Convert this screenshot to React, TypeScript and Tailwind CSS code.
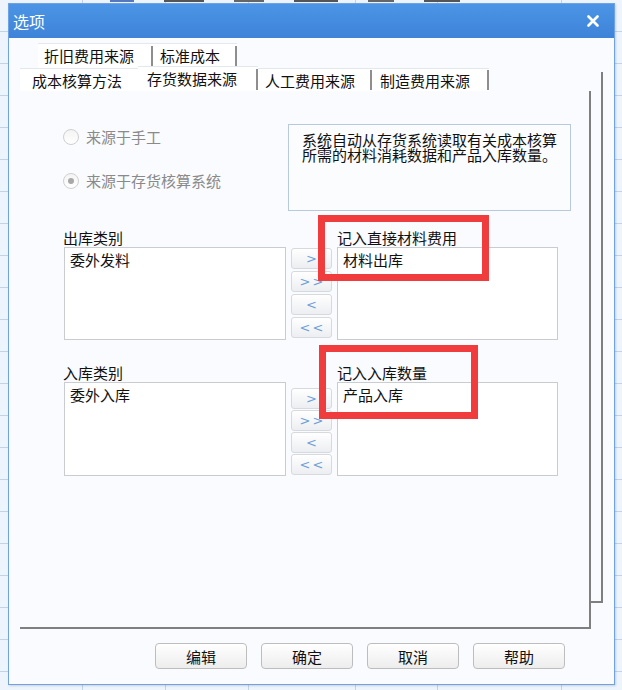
import React from "react";

function ArrowButtons({ section }: { section: 1 | 2 }) {
  const items = [">", ">>", "<", "<<"];
  return (
    <div
      className={
        section === 1
          ? "flex flex-col w-[41px] gap-[2px] mt-[1px]"
          : "flex flex-col w-[41px] gap-[1px] mt-[6px]"
      }
    >
      {items.map((t) => (
        <div
          key={t}
          className="h-[21px] rounded-[3px] border border-[#d6dade] bg-linear-to-b from-white to-[#eceef1] flex items-center justify-center text-[13px] leading-none text-[#6f9fd6] tracking-[2px] pl-[2px] [font-family:'DejaVu_Sans',sans-serif]"
        >
          {t}
        </div>
      ))}
    </div>
  );
}

function ListBox({ w, h, item }: { w: string; h: string; item: string }) {
  return (
    <div className={w + " " + h + " border border-[#c9cdd2] bg-white pl-[5px] pt-[2px] text-[15px] leading-[19px] text-[#111]"}>
      {item}
    </div>
  );
}

function Radio({ checked, label }: { checked: boolean; label: string }) {
  return (
    <div className="h-[22px] flex items-center">
      <div className="w-[16px] h-[16px] rounded-full border border-[#cfcfcf] bg-linear-to-b from-[#f4f4f4] to-white flex items-center justify-center">
        {checked && <div className="w-[6px] h-[6px] rounded-full bg-[#a8a8a8]" />}
      </div>
      <span className="ml-[7px] text-[15px] leading-[20px] text-[#8a8a8a]">{label}</span>
    </div>
  );
}

export default function App() {
  return (
    <div className="relative w-[622px] h-[690px] overflow-hidden bg-[#eef4fb] [font-family:'Noto_Sans_CJK_SC','Noto_Sans',sans-serif]">
      {/* spreadsheet grid behind */}
      <div className="absolute inset-0 bg-[repeating-linear-gradient(180deg,transparent_0px,transparent_31px,#c3d3e7_31px,#c3d3e7_32px)]" />
      <div className="absolute inset-0 flex">
        <div className="w-[83px] h-full border-r border-[#c3d3e7]" />
        <div className="w-[83px] h-full border-r border-[#c3d3e7]" />
        <div className="w-[83px] h-full border-r border-[#c3d3e7]" />
        <div className="w-[107px] h-full border-r border-[#c3d3e7]" />
        <div className="w-[82px] h-full border-r border-[#c3d3e7]" />
        <div className="w-[124px] h-full border-r border-[#c3d3e7]" />
      </div>
      <div className="absolute left-0 top-0 w-full h-[3px] flex gap-[30px] pl-[110px]">
        <div className="w-[24px] h-[2px] bg-[#5577bb]" />
        <div className="w-[40px] h-[2px] bg-[#555]" />
        <div className="w-[30px] h-[2px] bg-[#666]" />
        <div className="w-[44px] h-[2px] bg-[#555]" />
        <div className="w-[26px] h-[2px] bg-[#666]" />
        <div className="w-[36px] h-[2px] bg-[#555]" />
      </div>

      {/* dialog window */}
      <div className="absolute left-[8px] top-[3px] w-[607px] h-[682px] border border-[#6fa2e4] bg-[#f9fbfe] flex flex-col shadow-[1px_1px_2px_rgba(0,0,0,0.15)]">
        {/* title bar */}
        <div className="h-[34px] shrink-0 bg-linear-to-b from-[#4c94e5] to-[#3d84d9] flex items-center justify-between pl-[4px] pr-[15px]">
          <span className="text-white text-[16px] leading-none">选项</span>
          <svg width="12" height="12" viewBox="0 0 12 12">
            <path d="M1.5 1.5 L10.5 10.5 M10.5 1.5 L1.5 10.5" stroke="white" strokeWidth="2.6" strokeLinecap="round" />
          </svg>
        </div>

        {/* tab row 1 */}
        <div className="mt-[5px] ml-[29px] h-[25px] flex text-[15px] text-[#111]">
          <div className="w-[115px] bg-white flex items-center justify-between pl-[6px] border-t border-[#e3e8ee]">
            <span className="leading-[20px]">折旧费用来源</span>
            <span className="self-end mb-[1px] w-[2px] h-[21px] bg-[#8e8e8e]" />
          </div>
          <div className="w-[84px] bg-white flex items-center justify-between pl-[7px] border-t border-[#e3e8ee]">
            <span className="leading-[20px]">标准成本</span>
            <span className="self-end mb-[1px] w-[2px] h-[21px] bg-[#8e8e8e]" />
          </div>
        </div>

        {/* tab row 2 + panel + stacked page edge */}
        <div className="flex ml-[11px]">
          <div className="flex flex-col w-[571px]">
            <div className="h-[23px] flex text-[15px] text-[#111]">
              <div className="w-[118px] bg-white flex items-center pl-[12px] border-t border-[#e3e8ee]">
                <span className="leading-[20px] mt-[1px]">成本核算方法</span>
              </div>
              <div className="w-[120px] bg-white flex items-center justify-between pl-[9px] -mt-[2px] h-[25px] border-t border-[#e3e8ee]">
                <span className="leading-[20px]">存货数据来源</span>
                <span className="self-end mb-[1px] w-[2px] h-[21px] bg-[#8e8e8e]" />
              </div>
              <div className="w-[114px] bg-white flex items-center justify-between pl-[7px] border-t border-[#e3e8ee]">
                <span className="leading-[20px] mt-[1px]">人工费用来源</span>
                <span className="self-end mb-[1px] w-[2px] h-[20px] bg-[#8e8e8e]" />
              </div>
              <div className="w-[117px] bg-white flex items-center justify-between pl-[8px] border-t border-[#e3e8ee]">
                <span className="leading-[20px] mt-[1px]">制造费用来源</span>
                <span className="self-end mb-[1px] w-[2px] h-[20px] bg-[#8e8e8e]" />
              </div>
            </div>

            {/* panel */}
            <div className="h-[538px] border-r-2 border-b-2 border-[#7f7f7f] bg-[#f9fbfe] flex flex-col">
              {/* top section */}
              <div className="flex mt-[33px]">
                <div className="w-[225px] ml-[43px] pt-[2px] flex flex-col gap-[22px]">
                  <Radio checked={false} label="来源于手工" />
                  <Radio checked={true} label="来源于存货核算系统" />
                </div>
                <div className="w-[283px] h-[87px] border border-[#b9c9dc] bg-[#fafcfe] pl-[13px] pt-[7px] text-[15px] leading-[15px] text-[#111]">
                  <div>系统自动从存货系统读取有关成本核算</div>
                  <div>所需的材料消耗数据和产品入库数量。</div>
                </div>
              </div>

              {/* section 1 */}
              <div className="flex mt-[17px] h-[19px] text-[15px] leading-[19px] text-[#111]">
                <span className="ml-[43px] w-[274px]">出库类别</span>
                <span>记入直接材料费用</span>
              </div>
              <div className="flex ml-[44px] gap-[5px] items-start">
                <ListBox w="w-[222px]" h="h-[93px]" item="委外发料" />
                <ArrowButtons section={1} />
                <ListBox w="w-[221px]" h="h-[93px]" item="材料出库" />
              </div>

              {/* section 2 */}
              <div className="flex mt-[23px] h-[19px] text-[15px] leading-[19px] text-[#111]">
                <span className="ml-[43px] w-[274px]">入库类别</span>
                <span>记入入库数量</span>
              </div>
              <div className="flex ml-[44px] gap-[5px] items-start">
                <ListBox w="w-[222px]" h="h-[94px]" item="委外入库" />
                <ArrowButtons section={2} />
                <ListBox w="w-[221px]" h="h-[94px]" item="产品入库" />
              </div>
            </div>
          </div>
          {/* page behind edge */}
          <div className="w-[12px] h-[531px] mt-[4px] border-r-2 border-b-2 border-[#7f7f7f]" />
        </div>

        {/* bottom buttons */}
        <div className="flex gap-[14px] ml-[146px] mt-[14px]">
          {["编辑", "确定", "取消", "帮助"].map((t) => (
            <div
              key={t}
              className="w-[92px] h-[26px] rounded-[4px] border border-[#bdbdbd] bg-linear-to-b from-white to-[#ededed] flex items-center justify-center text-[15px] leading-none text-[#111]"
            >
              {t}
            </div>
          ))}
        </div>
      </div>

      {/* red annotation boxes */}
      <div className="absolute left-[318px] top-[215px] w-[171px] h-[66px] border-[7px] border-[#f03c3c]" />
      <div className="absolute left-[319px] top-[345px] w-[159px] h-[74px] border-[7px] border-[#f03c3c]" />
    </div>
  );
}
